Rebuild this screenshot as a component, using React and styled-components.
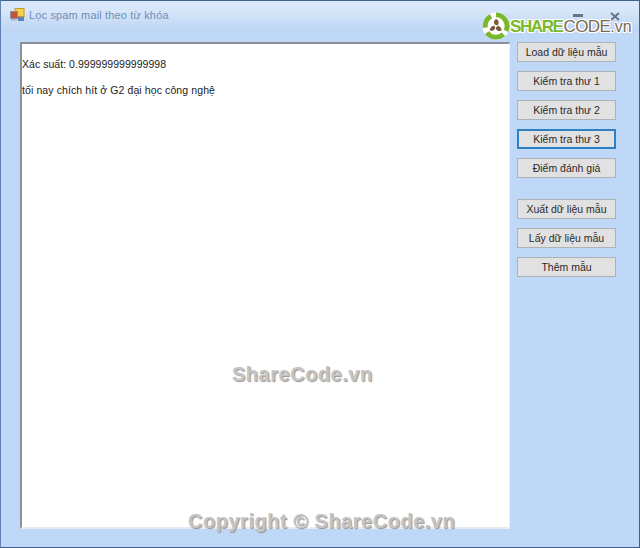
import React from 'react';
import styled, { createGlobalStyle } from 'styled-components';

const GlobalStyle = createGlobalStyle`
  html, body {
    margin: 0;
    padding: 0;
    background: #c0d8f8;
  }
`;

const Window = styled.div`
  position: relative;
  box-sizing: border-box;
  width: 640px;
  height: 548px;
  display: flex;
  flex-direction: column;
  overflow: hidden;
  background: #c0d8f8;
  border: 1px solid #3f5f8c;
  border-left-color: #5f82b0;
  font-family: Tahoma, "Liberation Sans", "DejaVu Sans", sans-serif;
  -webkit-font-smoothing: antialiased;
`;

const TitleBar = styled.div`
  flex: 0 0 28px;
  display: flex;
  align-items: center;
  gap: 4px;
  padding: 0 9px;
  background: linear-gradient(to bottom, #dbe8f9 0%, #d6e5f8 40%, #bfd6f5 100%);
`;

const TitleText = styled.span`
  font-size: 11px;
  letter-spacing: 0.15px;
  color: #6f8fba;
`;

const Content = styled.div`
  flex: 1;
  display: flex;
  gap: 7px;
  padding: 13px 23px 18px 19px;
  min-height: 0;
`;

const Output = styled.div`
  box-sizing: border-box;
  width: 491px;
  display: flex;
  flex-direction: column;
  background: #fff;
  border-style: solid;
  border-width: 2px 1px 2px 2px;
  border-color: #8d9094 #eef2f8 #e8ecf2 #8d9094;
  padding: 14px 0 0 0;
`;

const OutputLine = styled.div`
  font-size: 10.5px;
  line-height: 13px;
  color: #222;
  letter-spacing: ${p => p.$spacing}px;
  margin-left: ${p => p.$indent || 0}px;
  margin-bottom: 13px;
`;

const Sidebar = styled.div`
  display: flex;
  flex-direction: column;
  width: 99px;
  flex: none;
`;

const ActionButton = styled.div`
  box-sizing: border-box;
  height: 20px;
  margin-bottom: ${p => p.$gap}px;
  display: flex;
  align-items: center;
  justify-content: center;
  background: #e1e1e1;
  border: ${p => (p.$focused ? '2px solid #2f7fc4' : '1px solid #adb2b5')};
  font-size: 10.5px;
  color: #2a2a2a;
  white-space: nowrap;
`;

const MinimizeMark = styled.span`
  position: absolute;
  top: 13px;
  left: 572px;
  width: 10px;
  height: 3px;
  background: #66758c;
`;

const CloseMark = styled.svg`
  position: absolute;
  top: 11px;
  left: 609px;
`;

const Logo = styled.div`
  position: absolute;
  top: 11px;
  left: 481px;
  display: flex;
  align-items: center;
  gap: 0;
`;

const LogoWord = styled.span`
  font-family: "Liberation Sans", sans-serif;
  font-size: 17px;
  line-height: 1;
  letter-spacing: -0.6px;
  white-space: nowrap;
  color: #7a6a55;
  text-shadow: 1px 0 0 #fff, -1px 0 0 #fff, 0 1px 0 #fff, 0 -1px 0 #fff, 1px 1px 0 #fff, -1px -1px 0 #fff, 1px -1px 0 #fff, -1px 1px 0 #fff;
`;

const LogoStrong = styled.b`
  color: #7cb82c;
  font-weight: 700;
  letter-spacing: -1.4px;
  margin-right: 1px;
`;

const LogoDomain = styled.span`
  font-size: 16px;
  letter-spacing: 0;
`;

const Watermark = styled.div`
  position: absolute;
  top: ${p => p.$top}px;
  left: ${p => p.$left}px;
  font-family: "Liberation Sans", sans-serif;
  font-size: 20px;
  line-height: 1;
  font-weight: 700;
  letter-spacing: 0.52px;
  white-space: nowrap;
  color: #c4c4c4;
  text-shadow: 1px 1px 1px #959595;
`;

const AppIcon = () => (
  <svg width="15" height="14" viewBox="0 0 15 14">
    <rect x="5" y="0.5" width="9" height="8" fill="#f6d04a" stroke="#c49a2a" />
    <rect x="0.5" y="3.5" width="7" height="7" fill="#c9503c" stroke="#8b8f98" />
    <rect x="8" y="9" width="6" height="4" fill="#5b82b8" />
    <rect x="1" y="11" width="6" height="2" fill="#b9c3d0" />
  </svg>
);

const LogoMark = () => (
  <svg width="28" height="28" viewBox="0 0 34 34">
    <circle cx="17" cy="17" r="16.5" fill="#fff" />
    <g fill="none" stroke="#79b82c" strokeWidth="6">
      <path d="M17 3.5 A13.5 13.5 0 0 1 29 23" />
      <path d="M26 27 A13.5 13.5 0 0 1 6 25" />
      <path d="M4 19 A13.5 13.5 0 0 1 11 5" />
    </g>
    <g fill="#7a5a3c">
      <path d="M17 8.5 C21 10 21 14 18.5 16.5 L15 15 C14 12 14.5 10 17 8.5 Z" />
      <path d="M24 22.5 C20.5 24 17.5 22.5 16.5 19 L19.5 16.8 C22 17.5 23.5 19.5 24 22.5 Z" />
      <path d="M9.5 22.5 C9.5 19 12 17 15 16.5 L16 20 C14.5 22.5 12.5 23.5 9.5 22.5 Z" />
    </g>
  </svg>
);

const buttons = [
  { label: 'Load dữ liệu mẫu', gap: 9 },
  { label: 'Kiểm tra thư 1', gap: 9 },
  { label: 'Kiểm tra thư 2', gap: 9 },
  { label: 'Kiểm tra thư 3', gap: 9, focused: true },
  { label: 'Điểm đánh giá', gap: 21 },
  { label: 'Xuất dữ liệu mẫu', gap: 9 },
  { label: 'Lấy dữ liệu mẫu', gap: 9 },
  { label: 'Thêm mẫu', gap: 0 },
];

export default function App() {
  return (
    <Window>
      <GlobalStyle />
      <TitleBar>
        <AppIcon />
        <TitleText>Lọc spam mail theo từ khóa</TitleText>
      </TitleBar>
      <Content>
        <Output>
          <OutputLine $spacing={0.04}>Xác suất: 0.999999999999998</OutputLine>
          <OutputLine $spacing={0.1}>tối nay chích hít ở G2 đại học công nghệ</OutputLine>
        </Output>
        <Sidebar>
          {buttons.map(b => (
            <ActionButton key={b.label} $gap={b.gap} $focused={b.focused}>
              {b.label}
            </ActionButton>
          ))}
        </Sidebar>
      </Content>
      <MinimizeMark />
      <CloseMark width="10" height="9" viewBox="0 0 10 9">
        <path d="M1 1 L9 8 M9 1 L1 8" stroke="#66758c" strokeWidth="2" />
      </CloseMark>
      <Logo>
        <LogoMark />
        <LogoWord>
          <LogoStrong>SHARE</LogoStrong>CODE<LogoDomain>.vn</LogoDomain>
        </LogoWord>
      </Logo>
      <Watermark $top={363} $left={231}>ShareCode.vn</Watermark>
      <Watermark $top={510} $left={187}>Copyright © ShareCode.vn</Watermark>
    </Window>
  );
}
